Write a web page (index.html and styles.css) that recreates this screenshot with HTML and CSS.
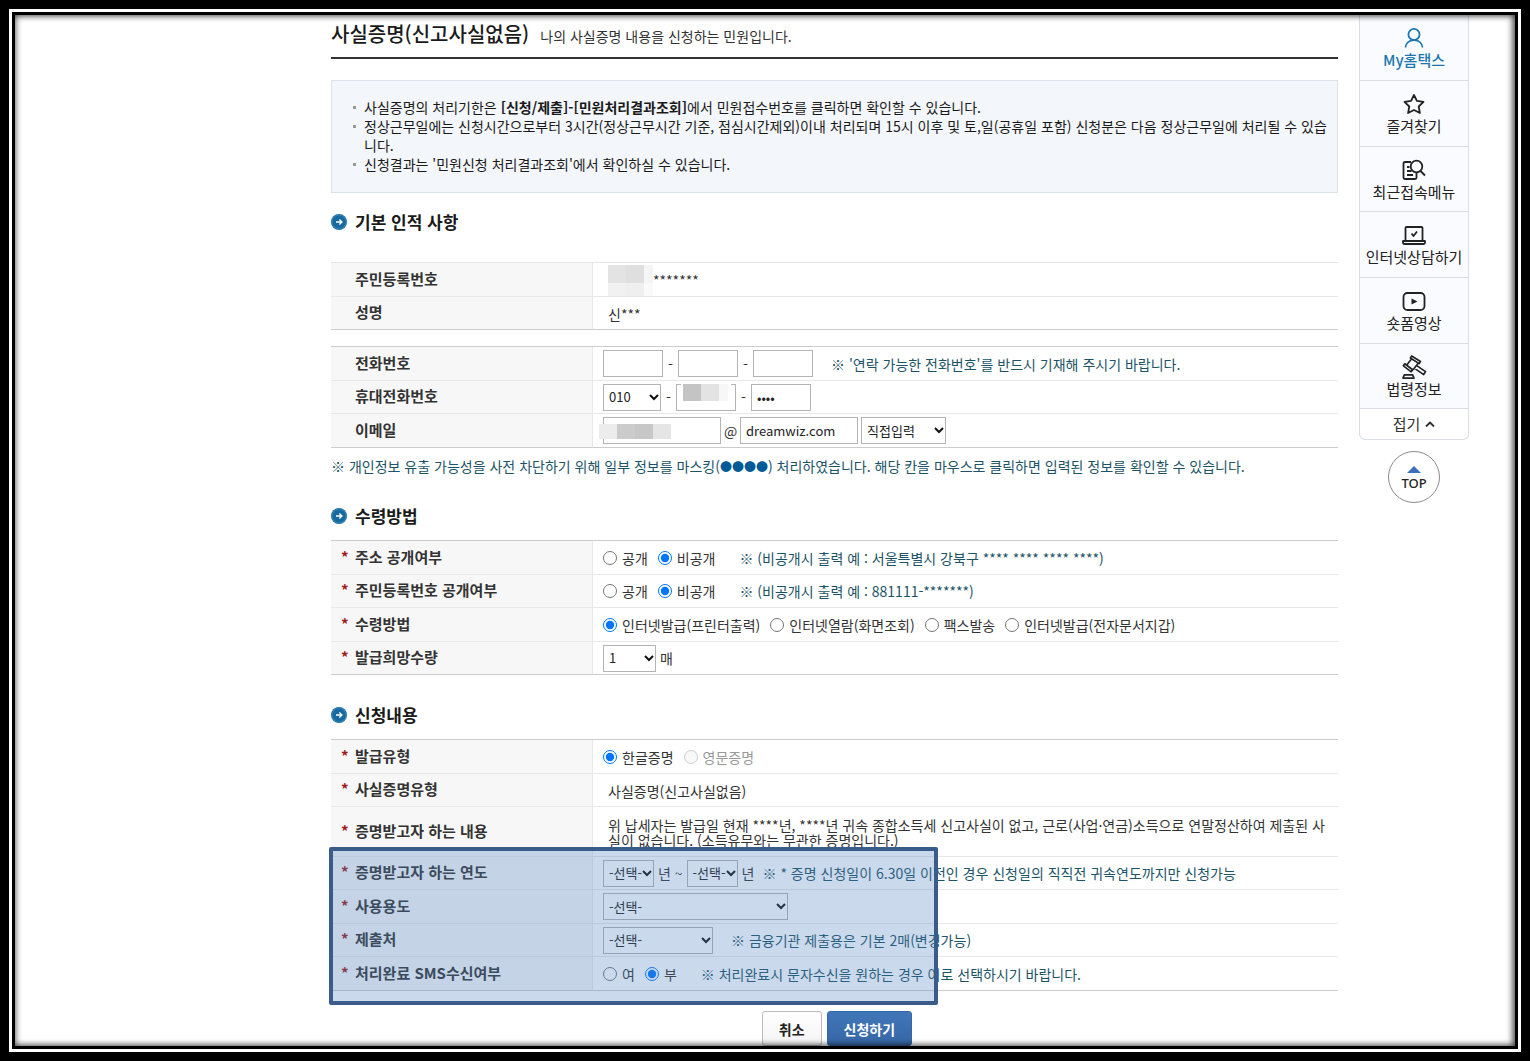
FILE: index.html
```html
<!DOCTYPE html>
<html lang="ko">
<head>
<meta charset="utf-8">
<title>사실증명(신고사실없음)</title>
<link rel="stylesheet" href="styles.css">
</head>
<body>
<svg class="sprite" width="0" height="0" aria-hidden="true">
  <symbol id="go" viewBox="0 0 16 16">
    <circle cx="8" cy="8" r="8" fill="#176a9f"/>
    <circle cx="8" cy="8" r="7" fill="none" stroke="#3a86b6" stroke-width="1"/>
    <path d="M5 8h5.6M8.4 5.6 10.9 8l-2.5 2.4" fill="none" stroke="#fff" stroke-width="1.4"/>
  </symbol>
</svg>
<div class="frame">
  <div class="page">
    <main class="content">
      <header class="page-head">
        <h1>사실증명(신고사실없음)</h1>
        <p>나의 사실증명 내용을 신청하는 민원입니다.</p>
      </header>

      <ul class="notice">
        <li>사실증명의 처리기한은 <strong>[신청/제출]-[민원처리결과조회]</strong>에서 민원접수번호를 클릭하면 확인할 수 있습니다.</li>
        <li>정상근무일에는 신청시간으로부터 3시간(정상근무시간 기준, 점심시간제외)이내 처리되며 15시 이후 및 토,일(공휴일 포함) 신청분은 다음 정상근무일에 처리될 수 있습니다.</li>
        <li>신청결과는 '민원신청 처리결과조회'에서 확인하실 수 있습니다.</li>
      </ul>

      <form>
        <section class="first">
          <h2><svg class="go"><use href="#go"/></svg>기본 인적 사항</h2>
          <table class="light-top">
            <tr><th scope="row">주민등록번호</th><td><div class="row text"><span class="mosaic mosaic-id"></span>*******</div></td></tr>
            <tr><th scope="row">성명</th><td><div class="row text">신***</div></td></tr>
          </table>
          <table class="contact">
            <tr><th scope="row"><label for="tel1">전화번호</label></th><td><div class="row">
              <input class="num" id="tel1" type="text" aria-label="전화번호 앞자리"><span class="dash">-</span><input class="num" type="text" aria-label="전화번호 가운데"><span class="dash">-</span><input class="num" type="text" aria-label="전화번호 뒷자리">
              <span class="note">※ '연락 가능한 전화번호'를 반드시 기재해 주시기 바랍니다.</span>
            </div></td></tr>
            <tr><th scope="row"><label for="cell1">휴대전화번호</label></th><td><div class="row">
              <select class="w-cell" id="cell1"><option>010</option></select><span class="dash">-</span><span class="masked"><input class="num" type="text" aria-label="휴대전화 가운데"><span class="mosaic mosaic-cell"></span></span><span class="dash">-</span><input class="num" type="password" value="0000" aria-label="휴대전화 뒷자리">
            </div></td></tr>
            <tr><th scope="row"><label for="mail">이메일</label></th><td><div class="row">
              <span class="masked"><input class="mail" id="mail" type="text"><span class="mosaic mosaic-mail"></span></span><span class="at">@</span><input class="mail" type="text" value="dreamwiz.com" aria-label="이메일 도메인"><select class="w-domain" aria-label="도메인 선택"><option>직접입력</option></select>
            </div></td></tr>
          </table>
          <p class="mask-note">※ 개인정보 유출 가능성을 사전 차단하기 위해 일부 정보를 마스킹(<span class="dots">●●●●</span>) 처리하였습니다. 해당 칸을 마우스로 클릭하면 입력된 정보를 확인할 수 있습니다.</p>
        </section>

        <section>
          <h2><svg class="go"><use href="#go"/></svg>수령방법</h2>
          <table>
            <tr><th scope="row"><i>*</i>주소 공개여부</th><td><div class="row">
              <label><input type="radio" name="addr">공개</label><label><input type="radio" name="addr" checked>비공개</label><span class="note">※ (비공개시 출력 예 : 서울특별시 강북구 **** **** **** ****)</span>
            </div></td></tr>
            <tr><th scope="row"><i>*</i>주민등록번호 공개여부</th><td><div class="row">
              <label><input type="radio" name="rrn">공개</label><label><input type="radio" name="rrn" checked>비공개</label><span class="note">※ (비공개시 출력 예 : 881111-*******)</span>
            </div></td></tr>
            <tr><th scope="row"><i>*</i>수령방법</th><td><div class="row">
              <label><input type="radio" name="recv" checked>인터넷발급(프린터출력)</label><label><input type="radio" name="recv">인터넷열람(화면조회)</label><label><input type="radio" name="recv">팩스발송</label><label><input type="radio" name="recv">인터넷발급(전자문서지갑)</label>
            </div></td></tr>
            <tr><th scope="row"><i>*</i><label for="qty">발급희망수량</label></th><td><div class="row">
              <select class="w-qty" id="qty"><option>1</option></select><span class="unit">매</span>
            </div></td></tr>
          </table>
        </section>

        <section class="request">
          <h2><svg class="go"><use href="#go"/></svg>신청내용</h2>
          <table>
            <tr><th scope="row"><i>*</i>발급유형</th><td><div class="row">
              <label><input type="radio" name="lang" checked>한글증명</label><label class="off"><input type="radio" name="lang" disabled>영문증명</label>
            </div></td></tr>
            <tr><th scope="row"><i>*</i>사실증명유형</th><td><div class="row text">사실증명(신고사실없음)</div></td></tr>
            <tr class="tall"><th scope="row"><i>*</i>증명받고자 하는 내용</th><td><p class="desc">위 납세자는 발급일 현재 ****년, ****년 귀속 종합소득세 신고사실이 없고, 근로(사업·연금)소득으로 연말정산하여 제출된 사실이 없습니다. (소득유무와는 무관한 증명입니다.)</p></td></tr>
            <tr><th scope="row"><i>*</i>증명받고자 하는 연도</th><td><div class="row">
              <select class="w-year" aria-label="시작 연도"><option>-선택-</option></select><span class="unit">년 ~</span><select class="w-year" aria-label="종료 연도"><option>-선택-</option></select><span class="unit">년</span><span class="note near">※ * 증명 신청일이 6.30일 이전인 경우 신청일의 직직전 귀속연도까지만 신청가능</span>
            </div></td></tr>
            <tr><th scope="row"><i>*</i><label for="use">사용용도</label></th><td><div class="row"><select class="w-use" id="use"><option>-선택-</option></select></div></td></tr>
            <tr><th scope="row"><i>*</i><label for="dest">제출처</label></th><td><div class="row"><select class="w-dest" id="dest"><option>-선택-</option></select><span class="note">※ 금융기관 제출용은 기본 2매(변경가능)</span></div></td></tr>
            <tr><th scope="row"><i>*</i>처리완료 SMS수신여부</th><td><div class="row">
              <label><input type="radio" name="sms">여</label><label><input type="radio" name="sms" checked>부</label><span class="note">※ 처리완료시 문자수신을 원하는 경우 여로 선택하시기 바랍니다.</span>
            </div></td></tr>
          </table>
          <div class="highlight"></div>
        </section>

        <div class="actions">
          <button type="button" class="btn">취소</button>
          <button type="submit" class="btn primary">신청하기</button>
        </div>
      </form>
    </main>

    <aside class="side">
      <nav class="quick">
        <a class="my" href="#">
          <svg viewBox="0 0 24 24"><circle cx="12" cy="8.500" r="5.600"/><path d="M3.500 21.500c.4-4.500 3.800-7.400 8.500-7.400s8.100 2.900 8.500 7.400"/></svg>My홈택스</a>
        <a href="#">
          <svg viewBox="0 0 24 24"><path d="m12 3 2.900 5.900 6.600 1-4.800 4.600 1.200 6.500L12 18l-5.900 3 1.200-6.500L2.500 9.900l6.600-1z"/></svg>즐겨찾기</a>
        <a href="#">
          <svg viewBox="0 0 24 24"><path d="M9 4H3Q1.500 4 1.500 5.500v14Q1.500 21 3 21h10q1.500 0 1.500-1.500V15M5 9h2.500M5 13h4.500M5 17h6"/><circle cx="14.500" cy="8.500" r="5.800"/><path d="m18.500 13 4.500 4.500"/></svg>최근접속메뉴</a>
        <a href="#">
          <svg viewBox="0 0 24 24"><path d="M3.500 17V5q0-1 1-1h15q1 0 1 1v12M1 18h22v1.500q0 1.500-1.500 1.500h-19Q1 21 1 19.500z"/><path d="m9.500 10.500 2 2.500 3.500-4.500"/></svg>인터넷상담하기</a>
        <a href="#">
          <svg viewBox="0 0 24 24"><rect x="1.500" y="4" width="21" height="17" rx="4"/><path d="m9.500 9.500 6 3-6 3z" fill="currentColor" stroke="none"/></svg>숏폼영상</a>
        <a href="#">
          <svg class="gavel" viewBox="0 0 26 26"><path d="m10.500 1 9.500 6-1.400 2.300-9.500-6zM3 9.500l8.500 6.500-1.500 2.200-8.500-6.500zM10 4.500l-5 6.500M17.500 9l-5.500 7M16 11.500l9.500 6.500-2 3.300-9.800-6.800M2.500 21.500h9l1.500 3.500H1z"/></svg>법령정보</a>
        <button type="button" class="fold">접기<svg viewBox="0 0 10 10"><path d="m1 7.500 4-4 4 4"/></svg></button>
      </nav>
      <a class="top" href="#"><svg viewBox="0 0 14 7"><path d="M7 0l7 7H0z"/></svg>TOP</a>
    </aside>
  </div>
</div>
</body>
</html>
```
FILE: styles.css
```css
* { box-sizing: border-box; }

body {
  margin: 0;
  padding: 9px;
  background: #000;
  color: #333;
  font: 14px/20px "Noto Sans CJK KR", sans-serif;
}

h1, h2, p, ul { margin: 0; padding: 0; }
.sprite { position: absolute; }

/* Double picture frame with an inner shadow */
.frame {
  position: relative;
  min-height: calc(100vh - 18px);
  border: 3px solid #fff;
  background: #fff;
}
.frame::after {
  content: "";
  position: absolute;
  inset: 0;
  border: 3px solid #000;
  box-shadow: inset 0 0 7px rgba(0, 0, 0, .7), inset -3px 0 6px rgba(0, 0, 0, .4);
  pointer-events: none;
}

.page {
  display: grid;
  grid-template-columns: minmax(0, 1fr) 110px;
  column-gap: 21px;
  padding: 3px 49px 3px 319px;
}

.page-head {
  display: flex;
  align-items: center;
  gap: 11px;
  height: 44px;
  padding-bottom: 4px;
  border-bottom: 2px solid #333;
}
h1 { font-size: 20px; line-height: 24px; font-weight: 500; color: #1a1a1a; }
.page-head p { padding-top: 3px; }

.notice {
  margin-top: 21px;
  padding: 17px 10px 18px 32px;
  border: 1px solid #dde2ea;
  background: #f3f6fb;
  color: #1a1a1a;
  line-height: 19px;
  list-style: none;
  word-break: break-all;
}
.notice li { position: relative; }
.notice li::before {
  content: "";
  position: absolute;
  left: -11px;
  top: 8px;
  width: 3px;
  height: 3px;
  background: #999;
}

section { position: relative; padding-top: 28px; }
section.first { padding-top: 17px; }
h2 {
  display: flex;
  align-items: center;
  gap: 8px;
  margin-bottom: 12px;
  color: #1a1a1a;
  font-size: 17px;
  line-height: 24px;
  font-weight: 700;
}
.first h2 { margin-bottom: 28px; }
.go { width: 16px; height: 16px; }

table {
  width: 100%;
  table-layout: fixed;
  border-collapse: separate;
  border-spacing: 0;
  border-top: 1px solid #ccc;
}
.light-top { border-top-color: #e5e5e5; }
.contact { margin-top: 16px; }
tr { height: 34px; }
tr:nth-child(even) { height: 33px; }
tr.tall { height: 50px; }
th, td { padding: 0; border-bottom: 1px solid #e8e8e8; }
tr:last-child > * { border-bottom-color: #ccc; }
th {
  width: 262px;
  padding: 0 0 2px 24px;
  border-right: 1px solid #e8e8e8;
  background: #f7f7f7;
  font-size: 15px;
  font-weight: 700;
  text-align: left;
}
th i {
  display: inline-block;
  width: 14px;
  margin-left: -14px;
  color: #a01c1c;
  font-style: normal;
}
td { padding-left: 10px; }

.row { display: flex; align-items: center; height: 32px; }
.text { padding: 1px 0 0 5px; }
.row label { display: flex; align-items: center; gap: 5px; margin-right: 10px; }
.row label.off { color: #999; }
.note { margin-left: 18px; color: #1c5366; }
.row label + .note { margin-left: 14px; }
.note.near { margin-left: 4px; }
.desc { padding: 2px 12px 0 5px; line-height: 15px; word-break: break-all; }
.unit { margin: 0 4px; }
.dash { width: 15px; text-align: center; }
.at { width: 19px; text-align: center; }

input[type="radio"] { width: 14px; height: 14px; margin: 0; }
input[type="text"], input[type="password"], select {
  height: 27px;
  border: 1px solid #b4b4b4;
  border-radius: 0;
  background: #fff;
  color: #222;
  font: 13px/20px "Noto Sans CJK KR", sans-serif;
}
input[type="text"], input[type="password"] { padding: 0 5px; }
select {
  padding: 0 0 0 5px;
  appearance: none;
  background: #fff url("data:image/svg+xml,%3Csvg xmlns='http://www.w3.org/2000/svg' width='10' height='7'%3E%3Cpath d='M1 1l4 4 4-4' fill='none' stroke='%23111' stroke-width='2'/%3E%3C/svg%3E") no-repeat right 1px center;
}
.num { width: 60px; }
.mail { width: 118px; }
.w-cell { width: 58px; }
.w-domain { width: 85px; margin-left: 3px; }
.w-qty { width: 53px; }
.w-year { width: 51px; }
.w-use { width: 185px; }
.w-dest { width: 110px; }

.masked { position: relative; display: flex; }
.mosaic { position: absolute; }
.mosaic-id {
  position: static;
  width: 45px;
  height: 31px;
  background:
    linear-gradient(rgba(255, 255, 255, 0) 18px, rgba(255, 255, 255, .5) 18px),
    linear-gradient(90deg, #e3e3e3 18px, #dfdfdf 18px 36px, #f5f5f5 36px);
}
.mosaic-cell {
  left: 5px;
  top: 0;
  width: 50px;
  height: 17px;
  background: linear-gradient(90deg, #fff 2px, #c4c4c4 2px 20px, #e3e3e3 20px 38px, #f7f7f7 38px 47px, #fff 47px);
}
.mosaic-mail {
  left: -4px;
  top: 7px;
  width: 72px;
  height: 15px;
  background: linear-gradient(90deg, #ececec 18px, #cbcbcb 18px 36px, #c7c7c7 36px 54px, #e5e5e5 54px);
}

.mask-note { margin-top: 8px; color: #1c5366; }
.dots { color: #005a96; font-size: 12px; line-height: 1; }

/* Marks the fields the applicant has to fill in */
.highlight {
  position: absolute;
  left: -2px;
  bottom: -14px;
  width: 609px;
  height: 158px;
  border: 4px solid #3a5c8b;
  border-radius: 2px;
  background: rgba(79, 129, 189, .3);
  pointer-events: none;
}

.actions { display: flex; justify-content: center; gap: 5px; padding: 20px 0 0 5px; }
.btn {
  height: 35px;
  padding: 0 16px;
  border: 1px solid #bbb;
  border-radius: 3px;
  background: linear-gradient(#fff, #f4f4f4);
  color: #222;
  font: 700 14px/20px "Noto Sans CJK KR", sans-serif;
}
.btn.primary {
  border-color: #3566a5;
  background: linear-gradient(#4076b9, #3767a6);
  color: #fff;
}

.quick {
  display: flex;
  flex-direction: column;
  border: 1px solid #dadde3;
  border-top: 0;
  border-radius: 0 0 6px 6px;
}
.quick a {
  display: flex;
  flex-direction: column;
  align-items: center;
  height: 66px;
  padding-top: 11px;
  border-bottom: 1px solid #dadde3;
  background: #fafbff;
  color: #222;
  font-size: 15px;
  text-decoration: none;
  white-space: nowrap;
}
.quick a:nth-child(3n) { height: 65px; }
.quick a.my { color: #1b77ae; font-weight: 500; }
.quick svg {
  width: 24px;
  height: 24px;
  fill: none;
  stroke: currentColor;
  stroke-width: 1.8;
  stroke-linejoin: round;
}
.quick svg.gavel { width: 26px; }
.quick .fold {
  display: flex;
  align-items: center;
  justify-content: center;
  gap: 5px;
  height: 30px;
  padding: 0;
  border: 0;
  background: none;
  color: #333;
  font: 15px/20px "Noto Sans CJK KR", sans-serif;
}
.quick .fold svg { width: 10px; height: 10px; }

.top {
  display: flex;
  flex-direction: column;
  align-items: center;
  width: 52px;
  height: 52px;
  margin: 11px auto 0;
  padding-top: 14px;
  border: 1px solid #8c8c8c;
  border-radius: 50%;
  color: #222;
  font: 500 13px/20px "Noto Sans", sans-serif;
  text-decoration: none;
}
.top svg { width: 14px; height: 7px; fill: #3a6fc0; }
```
